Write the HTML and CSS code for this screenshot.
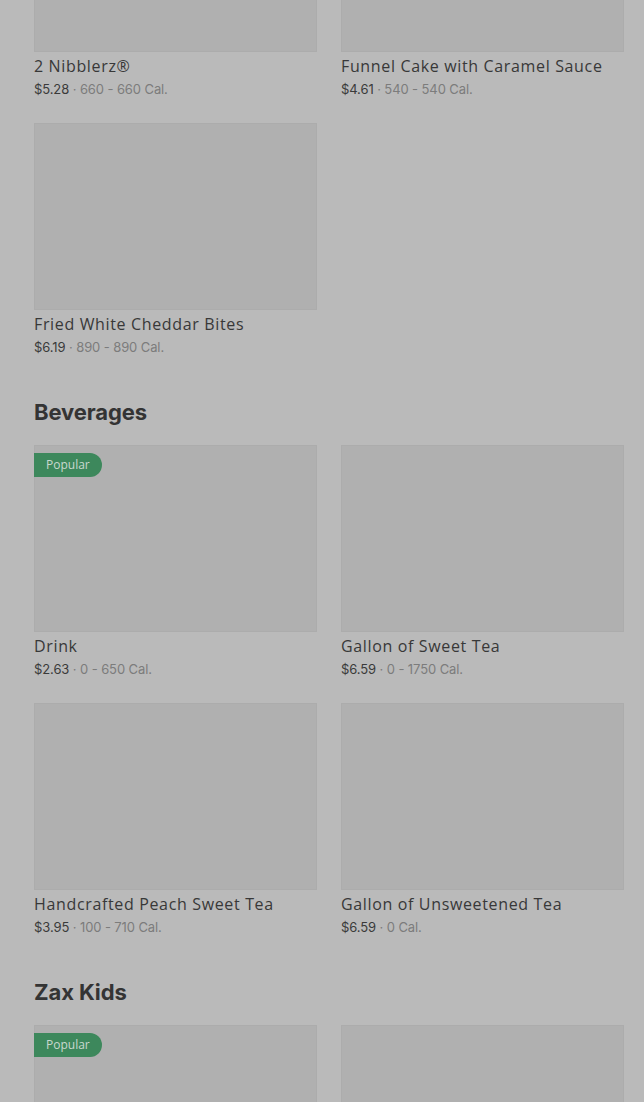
FILE: index.html
```html
<!DOCTYPE html>
<html lang="en">
<head>
    <meta charset="UTF-8">
    <meta name="viewport" content="width=device-width, initial-scale=1.0">
    <title>Menu</title>
    <link rel="stylesheet" href="styles.css">
</head>
<body>
    <div class="menu">
        <!-- Sides (scrolled) -->
        <section class="category category-first">
            <div class="items">
                <div class="item">
                    <div class="item-image"></div>
                    <div class="item-name">2 Nibblerz®</div>
                    <div class="item-meta"><span class="price">$5.28</span> · 660 - 660 Cal.</div>
                </div>
                <div class="item">
                    <div class="item-image"></div>
                    <div class="item-name">Funnel Cake with Caramel Sauce</div>
                    <div class="item-meta"><span class="price">$4.61</span> · 540 - 540 Cal.</div>
                </div>
                <div class="item">
                    <div class="item-image"></div>
                    <div class="item-name">Fried White Cheddar Bites</div>
                    <div class="item-meta"><span class="price">$6.19</span> · 890 - 890 Cal.</div>
                </div>
            </div>
        </section>

        <section class="category">
            <h2 class="category-title">Beverages</h2>
            <div class="items">
                <div class="item">
                    <div class="item-image">
                        <span class="badge">Popular</span>
                    </div>
                    <div class="item-name">Drink</div>
                    <div class="item-meta"><span class="price">$2.63</span> · 0 - 650 Cal.</div>
                </div>
                <div class="item">
                    <div class="item-image"></div>
                    <div class="item-name">Gallon of Sweet Tea</div>
                    <div class="item-meta"><span class="price">$6.59</span> · 0 - 1750 Cal.</div>
                </div>
                <div class="item">
                    <div class="item-image"></div>
                    <div class="item-name">Handcrafted Peach Sweet Tea</div>
                    <div class="item-meta"><span class="price">$3.95</span> · 100 - 710 Cal.</div>
                </div>
                <div class="item">
                    <div class="item-image"></div>
                    <div class="item-name">Gallon of Unsweetened Tea</div>
                    <div class="item-meta"><span class="price">$6.59</span> · 0 Cal.</div>
                </div>
            </div>
        </section>

        <section class="category">
            <h2 class="category-title">Zax Kids</h2>
            <div class="items">
                <div class="item">
                    <div class="item-image">
                        <span class="badge">Popular</span>
                    </div>
                </div>
                <div class="item">
                    <div class="item-image"></div>
                </div>
            </div>
        </section>
    </div>
</body>
</html>
```

FILE: styles.css
```css
body {
    margin: 0;
    height: 1102px;
    background-color: #bababa;
    font-family: "Open Sans", Arial, sans-serif;
    color: #383838;
    overflow: hidden;
}

.menu {
    padding: 0 20px 0 34px;
}

/* page is scrolled part-way into the first category */
.category-first {
    margin-top: -135px;
}

.category-title {
    margin: 40px 0 18px;
    font-family: Inter, Arial, sans-serif;
    font-size: 22px;
    line-height: 30px;
    font-weight: 700;
    letter-spacing: -0.1px;
    color: #343434;
}

.items {
    display: grid;
    grid-template-columns: repeat(2, 283px);
    column-gap: 24px;
    row-gap: 24px;
}

.item {
    padding-bottom: 1px;
}

.item-image {
    position: relative;
    height: 187px;
    background-color: #b0b0b0;
    box-shadow: inset 0 0 0 1px #acacac;
}

.badge {
    position: absolute;
    top: 8px;
    left: 0;
    height: 24px;
    padding: 0 12px;
    border-radius: 0 12px 12px 0;
    background-color: #3d885c;
    color: #c9d9cf;
    font-family: "Open Sans", Arial, sans-serif;
    font-size: 12px;
    line-height: 24px;
}

.item-name {
    margin-top: 3px;
    font-size: 16px;
    line-height: 22px;
    letter-spacing: 0.65px;
    color: #383838;
    white-space: nowrap;
}

.item-meta {
    margin-top: 3px;
    font-family: Inter, Arial, sans-serif;
    font-size: 13px;
    line-height: 18px;
    letter-spacing: -0.1px;
    color: #7c7c7c;
}

.price {
    color: #3a3a3a;
}
```
